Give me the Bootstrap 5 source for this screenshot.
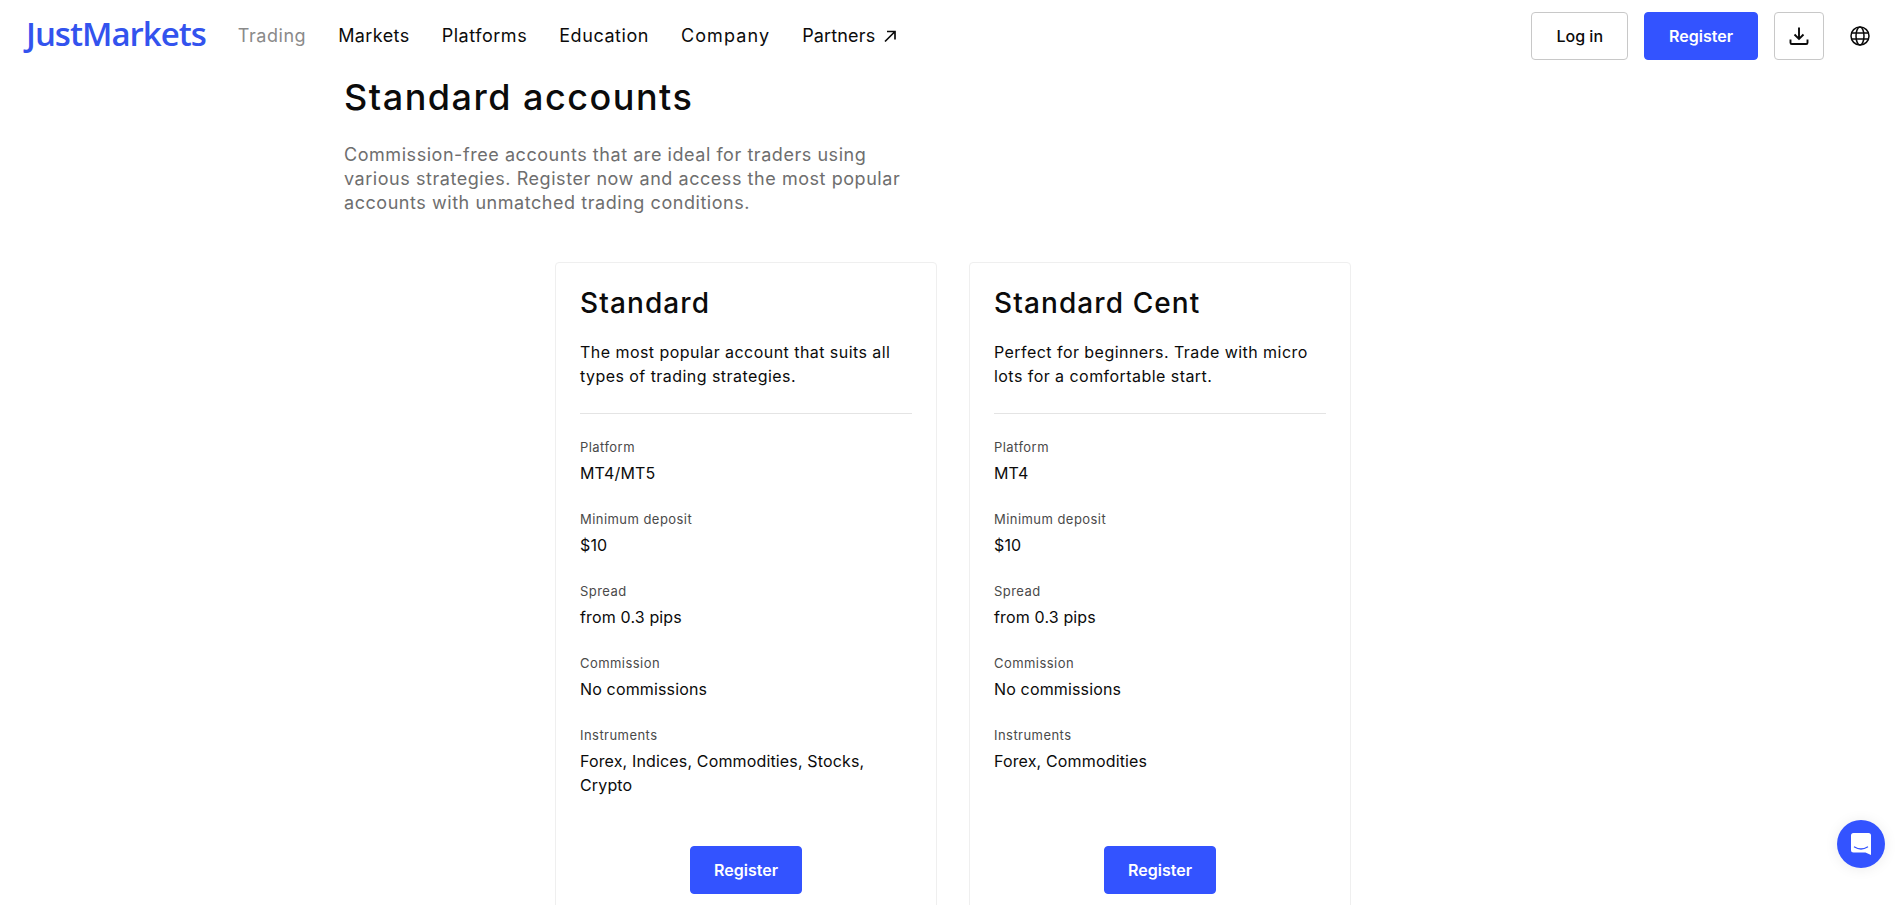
<!DOCTYPE html>
<html lang="en">
<head>
<meta charset="utf-8">
<title>JustMarkets - Standard accounts</title>
<link href="https://cdn.jsdelivr.net/npm/bootstrap@5.3.0/dist/css/bootstrap.min.css" rel="stylesheet">
<style>
html,body{height:905px;overflow:hidden}
body{font-family:Inter,"Noto Sans",sans-serif;color:#0b0b0b;background:#fff}
.jm-nav{height:70px;padding:2px 24px 0 26px;background:#fff}
.jm-brand{font-family:"Open Sans",sans-serif;font-weight:600;font-size:33px;line-height:1;letter-spacing:-1px;color:#3353ee;margin-right:32px;padding:0 0 6px}
.jm-brand:hover{color:#3353ee}
.jm-links{gap:32px}
.jm-links .nav-link{font-size:18px;line-height:24px;padding:0;color:#0b0b0b;letter-spacing:.55px}
.jm-links .nav-link.disabled{color:#8a8a8a}
.jm-links .jm-mk{letter-spacing:.4px}
.jm-links .jm-wide{letter-spacing:1.1px}
.jm-links .jm-tight{letter-spacing:.15px}
.btn-jm,.btn-jm:hover{background:#3353ff;border:1px solid #3353ff;color:#fff;font-weight:600;font-size:16px;height:48px;padding:0 23px;border-radius:4px;display:inline-flex;align-items:center}
.btn-jm-o,.btn-jm-o:hover{background:#fff;border:1px solid #c8c8c8;color:#0b0b0b;font-weight:500;font-size:16px;height:48px;padding:0 24px;border-radius:4px;display:inline-flex;align-items:center}
.btn-jm-o.sq{width:50px;padding:0;justify-content:center}
.jm-right{gap:16px}
.jm-right .btn-jm{padding:0 24px}
.jm-globe{margin-left:10px;margin-right:9px}
.jm-main{width:1215px;margin:0 auto}
.jm-main h1{font-size:36px;font-weight:500;line-height:48px;margin:3px 0 22px;letter-spacing:1.5px}
.jm-lead{font-size:18px;line-height:24px;color:#6e6e6e;width:560px;margin:0 0 47px;letter-spacing:.55px}
.jm-cards{gap:32px;padding-left:3px}
.jm-card{width:382px;height:700px;border:1px solid #efefef;border-radius:4px;padding:24px}
.jm-card h2{font-size:28px;font-weight:500;line-height:32px;margin:0 0 21px;letter-spacing:1.1px}
.jm-desc{font-size:16px;line-height:24px;margin:0 0 25px;letter-spacing:.45px}
.jm-card hr{margin:0 0 24px;border-color:#e4e4e4;opacity:1}
.jm-spec{height:72px}
.jm-spec.tall{height:96px}
.jm-spec span{display:block}
.jm-l{font-size:13px;line-height:18px;color:#4a4a4a;margin-bottom:5px;letter-spacing:.45px}
.jm-v{font-size:16px;line-height:24px;letter-spacing:.15px}
.jm-cta{margin-top:24px}
.jm-chat{position:fixed;right:18px;bottom:37px;width:48px;height:48px;border-radius:50%;background:#3353ff;box-shadow:0 1px 14px rgba(0,0,0,.08)}
</style>
</head>
<body>
<nav class="navbar jm-nav flex-nowrap justify-content-between">
  <div class="d-flex align-items-center">
    <a class="navbar-brand jm-brand" href="#">JustMarkets</a>
    <ul class="nav jm-links align-items-center">
      <li class="nav-item"><a class="nav-link disabled" href="#">Trading</a></li>
      <li class="nav-item"><a class="nav-link jm-mk" href="#">Markets</a></li>
      <li class="nav-item"><a class="nav-link" href="#">Platforms</a></li>
      <li class="nav-item"><a class="nav-link" href="#">Education</a></li>
      <li class="nav-item"><a class="nav-link jm-wide" href="#">Company</a></li>
      <li class="nav-item"><a class="nav-link jm-tight d-flex align-items-center gap-2" href="#">Partners
        <svg width="14" height="14" viewBox="0 0 14 14" fill="none" stroke="#0b0b0b" stroke-width="1.7"><path d="M2 12.5 12 2.5M4 2.5h8v8"/></svg></a></li>
    </ul>
  </div>
  <div class="d-flex align-items-center jm-right">
    <a class="btn btn-jm-o" href="#">Log in</a>
    <a class="btn btn-jm" href="#">Register</a>
    <a class="btn btn-jm-o sq" href="#" aria-label="Download">
      <svg width="20" height="20" viewBox="0 0 20 20" fill="none" stroke="#0b0b0b" stroke-width="1.9"><path d="M10 1.5v11M5.500 8.500 10 13l4.500-4.500M1.500 13.500v3.200c0 .8.5 1.300 1.300 1.300h14.400c.8 0 1.300-.5 1.300-1.300v-3.200"/></svg>
    </a>
    <svg class="jm-globe" width="20" height="20" viewBox="0 0 20 20" fill="none" stroke="#0b0b0b" stroke-width="1.500"><circle cx="10" cy="10" r="9"/><ellipse cx="10" cy="10" rx="4" ry="9"/><path d="M1.500 7h17M1.500 13h17"/></svg>
  </div>
</nav>
<main class="jm-main">
  <h1>Standard accounts</h1>
  <p class="jm-lead">Commission-free accounts that are ideal for traders using various strategies. Register now and access the most popular accounts with unmatched trading conditions.</p>
  <div class="d-flex justify-content-center jm-cards">
    <div class="card jm-card">
      <h2>Standard</h2>
      <p class="jm-desc">The most popular account that suits all types of trading strategies.</p>
      <hr>
      <div class="jm-spec"><span class="jm-l">Platform</span><span class="jm-v">MT4/MT5</span></div>
      <div class="jm-spec"><span class="jm-l">Minimum deposit</span><span class="jm-v">$10</span></div>
      <div class="jm-spec"><span class="jm-l">Spread</span><span class="jm-v">from 0.3 pips</span></div>
      <div class="jm-spec"><span class="jm-l">Commission</span><span class="jm-v">No commissions</span></div>
      <div class="jm-spec tall"><span class="jm-l">Instruments</span><span class="jm-v">Forex, Indices, Commodities, Stocks, Crypto</span></div>
      <div class="text-center jm-cta"><a class="btn btn-jm" href="#">Register</a></div>
    </div>
    <div class="card jm-card">
      <h2>Standard Cent</h2>
      <p class="jm-desc">Perfect for beginners. Trade with micro lots for a comfortable start.</p>
      <hr>
      <div class="jm-spec"><span class="jm-l">Platform</span><span class="jm-v">MT4</span></div>
      <div class="jm-spec"><span class="jm-l">Minimum deposit</span><span class="jm-v">$10</span></div>
      <div class="jm-spec"><span class="jm-l">Spread</span><span class="jm-v">from 0.3 pips</span></div>
      <div class="jm-spec"><span class="jm-l">Commission</span><span class="jm-v">No commissions</span></div>
      <div class="jm-spec tall"><span class="jm-l">Instruments</span><span class="jm-v">Forex, Commodities</span></div>
      <div class="text-center jm-cta"><a class="btn btn-jm" href="#">Register</a></div>
    </div>
  </div>
</main>
<a class="jm-chat d-flex align-items-center justify-content-center" href="#" aria-label="Chat">
  <svg width="24" height="24" viewBox="0 0 24 24"><path fill="#fff" d="M4.500 1h15A2.500 2.500 0 0 1 22 3.500V23l-5.500-2.500h-12A2.500 2.500 0 0 1 2 18V3.500A2.500 2.500 0 0 1 4.500 1z"/><path fill="none" stroke="#3353ff" stroke-width="1.400" stroke-linecap="round" d="M5.500 15c4 2.400 9 2.400 13 0"/></svg>
</a>
<script src="https://cdn.jsdelivr.net/npm/bootstrap@5.3.0/dist/js/bootstrap.bundle.min.js"></script>
</body>
</html>
